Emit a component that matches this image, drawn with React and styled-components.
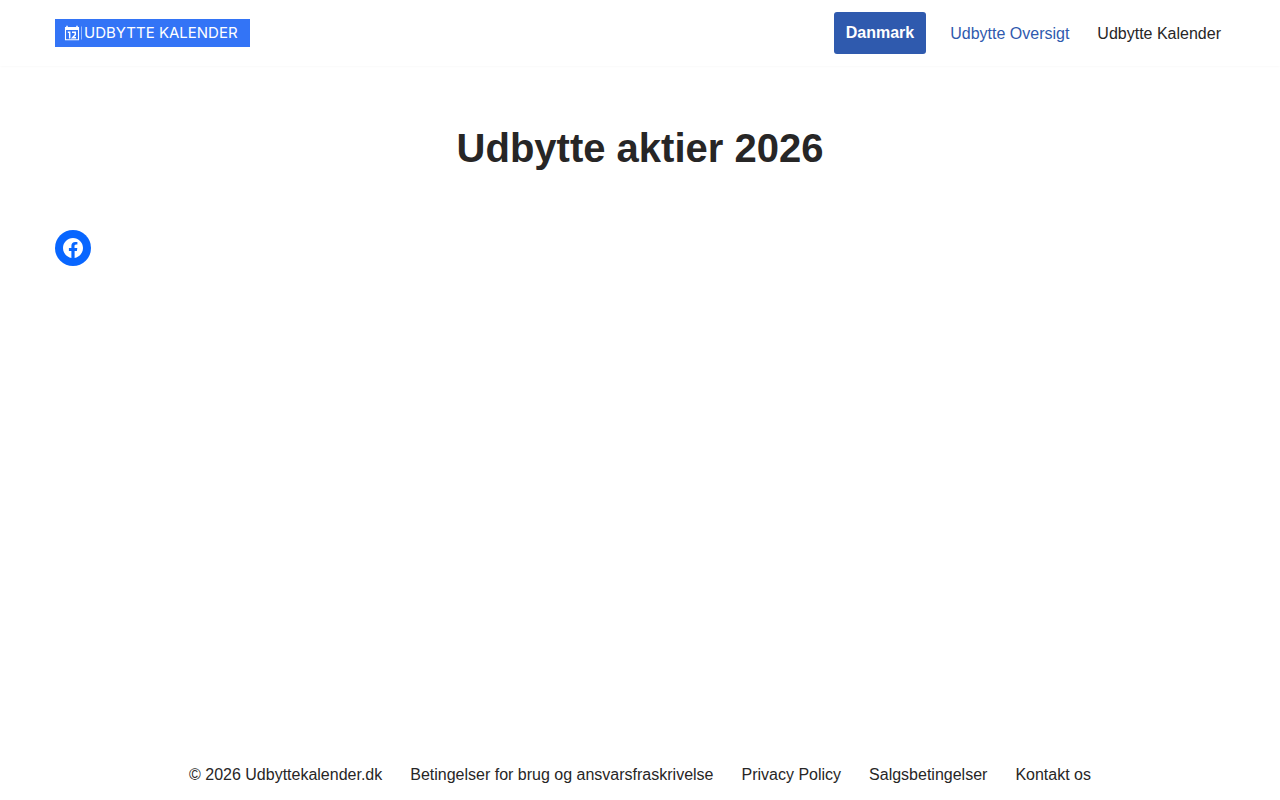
import React from 'react';
import styled, { createGlobalStyle } from 'styled-components';

const GlobalStyle = createGlobalStyle`
  * {
    box-sizing: border-box;
  }

  body {
    margin: 0;
    background-color: #fff;
    color: #272626;
    font-family: "Liberation Sans", Arial, sans-serif;
    font-size: 16px;
    line-height: 24px;
  }
`;

const Page = styled.div`
  display: flex;
  flex-direction: column;
  min-height: 100vh;
`;

const Container = styled.div`
  width: 100%;
  max-width: 1200px;
  margin: 0 auto;
  padding: 0 15px;
`;

const Header = styled.header`
  padding: 12px 0;
  box-shadow: 0 -1px 3px rgba(0, 0, 0, 0.1);
`;

const HeaderRow = styled(Container)`
  display: flex;
  flex-wrap: wrap;
  align-items: center;
  justify-content: space-between;
`;

const Logo = styled.a`
  display: flex;
  align-items: center;
  width: 195px;
  height: 28px;
  padding-left: 9px;
  background-color: #3374f6;
  color: #fff;
  font-family: Inter, "Liberation Sans", sans-serif;
  font-size: 15px;
  line-height: 28px;
  text-decoration: none;
  white-space: nowrap;
`;

const LogoIcon = styled.svg`
  flex: none;
  width: 20px;
  height: 16px;
`;

const Nav = styled.nav`
  display: flex;
  flex-wrap: wrap;
  align-items: center;
  gap: 24px;
  padding-right: 4px;
`;

const CountryButton = styled.a`
  padding: 9px 12px;
  border-radius: 3px;
  background-color: #2f5aae;
  color: #fff;
  font-weight: 700;
  text-decoration: none;
  line-height: 24px;
`;

const Menu = styled.ul`
  display: flex;
  flex-wrap: wrap;
  justify-content: center;
  gap: 0 28px;
  margin: 0;
  padding: 2px 0 0;
  list-style: none;
`;

const MenuLink = styled.a`
  color: ${({ $active }) => ($active ? '#2f5aae' : 'inherit')};
  text-decoration: none;
`;

const Main = styled.main`
  flex: 1;

  h1 {
    margin: 60px 0;
    font-size: 40px;
    line-height: 44px;
    text-align: center;
  }
`;

const SocialLink = styled.a`
  display: inline-flex;
  padding: 6px;
  border-radius: 50%;
  background-color: #0866ff;
  color: #fff;
`;

const Footer = styled.footer`
  padding: 13px 0;
`;

const footerLinks = [
  'Betingelser for brug og ansvarsfraskrivelse',
  'Privacy Policy',
  'Salgsbetingelser',
  'Kontakt os',
];

const CalendarIcon = () => (
  <LogoIcon viewBox="0 0 20 16" fill="none" stroke="#fff" aria-hidden="true">
    <path d="M1.5 2.5h13v12.3h-13z" strokeWidth="1.1" />
    <path d="M1 3.5h14" strokeWidth="3" />
    <path d="M3 .8v2.5M13 .8v2.5" strokeWidth="1.5" />
    <path d="M3.8 7.2h1.9v6.2M8 7.2h3.3v2.6L8.6 12.7H12" strokeWidth="1.5" />
    <path d="M17.5 1.5v13" strokeWidth="1" opacity="0.5" />
  </LogoIcon>
);

const FacebookIcon = () => (
  <svg width="24" height="24" viewBox="0 0 24 24" fill="currentColor" aria-hidden="true">
    <path d="M12 2C6.5 2 2 6.5 2 12c0 5 3.7 9.1 8.4 9.9v-7H7.9V12h2.5V9.8c0-2.5 1.5-3.9 3.8-3.9 1.1 0 2.2.2 2.2.2v2.5h-1.3c-1.2 0-1.6.8-1.6 1.6V12h2.8l-.4 2.9h-2.3v7C18.3 21.1 22 17 22 12c0-5.5-4.5-10-10-10z" />
  </svg>
);

const App = () => (
  <Page>
    <GlobalStyle />
    <Header>
      <HeaderRow>
        <Logo href="#">
          <CalendarIcon />
          <span>UDBYTTE KALENDER</span>
        </Logo>
        <Nav>
          <CountryButton href="#danmark">Danmark</CountryButton>
          <Menu>
            <li><MenuLink href="#oversigt" $active>Udbytte Oversigt</MenuLink></li>
            <li><MenuLink href="#kalender">Udbytte Kalender</MenuLink></li>
          </Menu>
        </Nav>
      </HeaderRow>
    </Header>
    <Main>
      <Container>
        <h1>Udbytte aktier 2026</h1>
        <SocialLink href="#facebook" aria-label="Facebook">
          <FacebookIcon />
        </SocialLink>
      </Container>
    </Main>
    <Footer>
      <Container>
        <Menu>
          <li>© 2026 Udbyttekalender.dk</li>
          {footerLinks.map((label) => (
            <li key={label}><MenuLink href="#">{label}</MenuLink></li>
          ))}
        </Menu>
      </Container>
    </Footer>
  </Page>
);

export default App;
